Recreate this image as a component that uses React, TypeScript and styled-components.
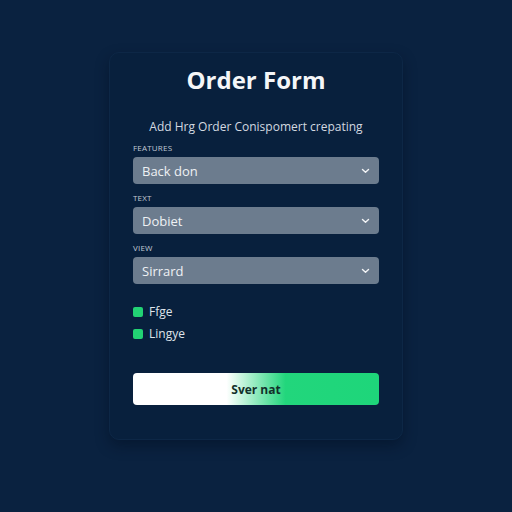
import React from "react";
import styled, { createGlobalStyle } from "styled-components";

const Global = createGlobalStyle`
  html, body { margin: 0; padding: 0; background: #0a2240; }
  body { font-family: "Open Sans", "Liberation Sans", sans-serif; }
`;

const Page = styled.div`
  width: 512px;
  height: 512px;
  display: flex;
  justify-content: center;
  padding-top: 52px;
  box-sizing: border-box;
  background: #0a2240;
`;

const Card = styled.div`
  width: 294px;
  height: 388px;
  box-sizing: border-box;
  padding: 10px 23px 0;
  background: #08203d;
  border: 1px solid #0d2746;
  border-radius: 10px;
  box-shadow: 0 6px 14px rgba(2, 14, 32, 0.45);
  display: flex;
  flex-direction: column;
`;

const Title = styled.h1`
  margin: 0;
  font-size: 24px;
  font-weight: 700;
  color: #f4f6f8;
  text-align: center;
  line-height: 34px;
`;

const Subtitle = styled.p`
  margin: 21px 0 0;
  font-size: 12px;
  color: #d3d9e0;
  text-align: center;
  line-height: 18px;
`;

const Field = styled.div<{ $gap: number }>`
  margin-top: ${(p) => p.$gap}px;
  display: flex;
  flex-direction: column;
`;

const Label = styled.span`
  font-size: 8px;
  color: #c0c9d4;
  letter-spacing: 0.2px;
  text-transform: uppercase;
  line-height: 10px;
  margin-bottom: 4px;
`;

const Select = styled.div`
  height: 27px;
  border-radius: 4px;
  background: #6c7c8e;
  display: flex;
  align-items: center;
  justify-content: space-between;
  padding: 0 9px 0 9px;
  font-size: 13px;
  color: #eef1f4;
`;

const Checks = styled.div`
  margin-top: 19px;
  display: flex;
  flex-direction: column;
  gap: 5px;
`;

const Check = styled.label`
  display: flex;
  align-items: center;
  gap: 6px;
  font-size: 12px;
  color: #dfe4ea;
  line-height: 17px;
`;

const Box = styled.span`
  width: 10px;
  height: 10px;
  border-radius: 2px;
  background: #22d374;
`;

const Button = styled.button`
  margin-top: 31px;
  height: 32px;
  border: none;
  border-radius: 4px;
  background: linear-gradient(90deg, #ffffff 0%, #ffffff 38%, #22d67c 62%, #1ed67a 100%);
  font-family: inherit;
  font-size: 12px;
  font-weight: 700;
  color: #12302a;
`;

const Chevron = () => (
  <svg width="9" height="6" viewBox="0 0 9 6" fill="none">
    <path d="M1.5 1.5 L4.5 4.3 L7.5 1.5" stroke="#f2f4f6" strokeWidth="1.4" strokeLinecap="round" strokeLinejoin="round" />
  </svg>
);

const fields = [
  { label: "Features", value: "Back don", gap: 7 },
  { label: "Text", value: "Dobiet", gap: 9 },
  { label: "View", value: "Sirrard", gap: 9 },
];

export default function App() {
  return (
    <>
      <Global />
      <Page>
        <Card>
          <Title>Order Form</Title>
          <Subtitle>Add Hrg Order Conispomert crepating</Subtitle>
          {fields.map((f) => (
            <Field key={f.label} $gap={f.gap}>
              <Label>{f.label}</Label>
              <Select>
                {f.value}
                <Chevron />
              </Select>
            </Field>
          ))}
          <Checks>
            <Check><Box />Ffge</Check>
            <Check><Box />Lingye</Check>
          </Checks>
          <Button>Sver nat</Button>
        </Card>
      </Page>
    </>
  );
}
